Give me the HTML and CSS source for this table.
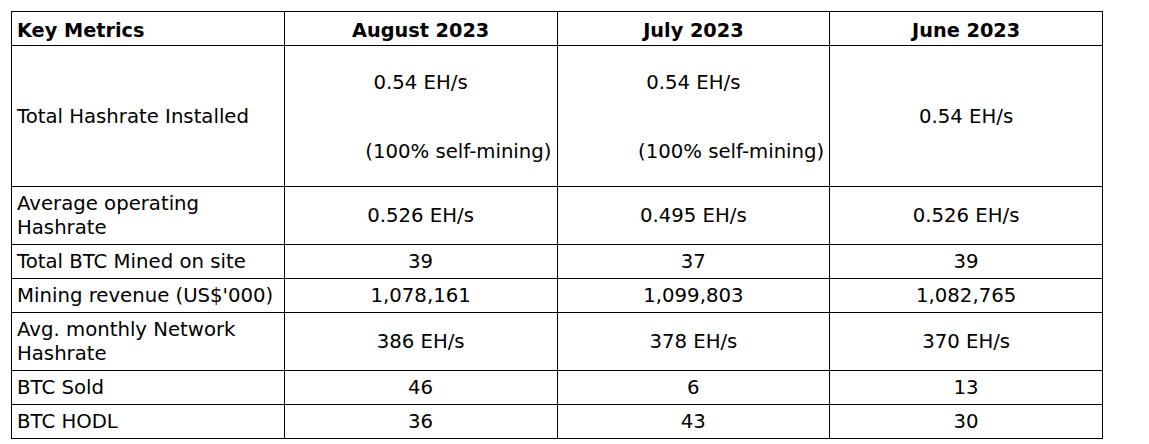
FILE: index.html
```html
<!DOCTYPE html>
<html>
<head>
<meta charset="utf-8">
<link rel="stylesheet" href="styles.css">
</head>
<body>
<table class="metrics">
  <colgroup>
    <col class="c"><col class="c"><col class="c"><col class="c">
  </colgroup>
  <thead>
    <tr>
      <th class="label">Key Metrics</th>
      <th>August 2023</th>
      <th>July 2023</th>
      <th>June 2023</th>
    </tr>
  </thead>
  <tbody>
    <tr>
      <td class="label">Total Hashrate Installed</td>
      <td class="split"><div class="stack"><div class="main">0.54 EH/s</div><div class="note">(100% self-mining)</div></div></td>
      <td class="split"><div class="stack"><div class="main">0.54 EH/s</div><div class="note">(100% self-mining)</div></div></td>
      <td>0.54 EH/s</td>
    </tr>
    <tr>
      <td class="label">Average operating Hashrate</td>
      <td>0.526 EH/s</td>
      <td>0.495 EH/s</td>
      <td>0.526 EH/s</td>
    </tr>
    <tr>
      <td class="label">Total BTC Mined on site</td>
      <td>39</td>
      <td>37</td>
      <td>39</td>
    </tr>
    <tr>
      <td class="label">Mining revenue (US$'000)</td>
      <td>1,078,161</td>
      <td>1,099,803</td>
      <td>1,082,765</td>
    </tr>
    <tr>
      <td class="label">Avg. monthly Network Hashrate</td>
      <td>386 EH/s</td>
      <td>378 EH/s</td>
      <td>370 EH/s</td>
    </tr>
    <tr>
      <td class="label">BTC Sold</td>
      <td>46</td>
      <td>6</td>
      <td>13</td>
    </tr>
    <tr>
      <td class="label">BTC HODL</td>
      <td>36</td>
      <td>43</td>
      <td>30</td>
    </tr>
  </tbody>
</table>
</body>
</html>
```
FILE: styles.css
```css
html, body {
  margin: 0;
  padding: 0;
  background: #fff;
}
body {
  padding: 11px 0 0 11px;
  font-family: "DejaVu Sans", Verdana, sans-serif;
  font-size: 19.7px;
  color: #000;
}
.metrics {
  border-collapse: collapse;
  table-layout: fixed;
  width: 1092px;
}
.metrics col.c {
  width: 25%;
}
.metrics th,
.metrics td {
  border: 1px solid #000;
  padding: 5px 5px 4px 5px;
  line-height: 24px;
  text-align: center;
  vertical-align: middle;
}
.metrics th {
  font-weight: bold;
  font-size: 19.3px;
  padding-top: 7px;
  padding-bottom: 2px;
}
.metrics .label {
  text-align: left;
}
.stack {
  display: flex;
  flex-direction: column;
  height: 131px;
  padding-top: 20px;
  box-sizing: border-box;
  gap: 45px;
}
.stack .main {
  text-align: center;
}
.stack .note {
  text-align: right;
  white-space: nowrap;
}
```
